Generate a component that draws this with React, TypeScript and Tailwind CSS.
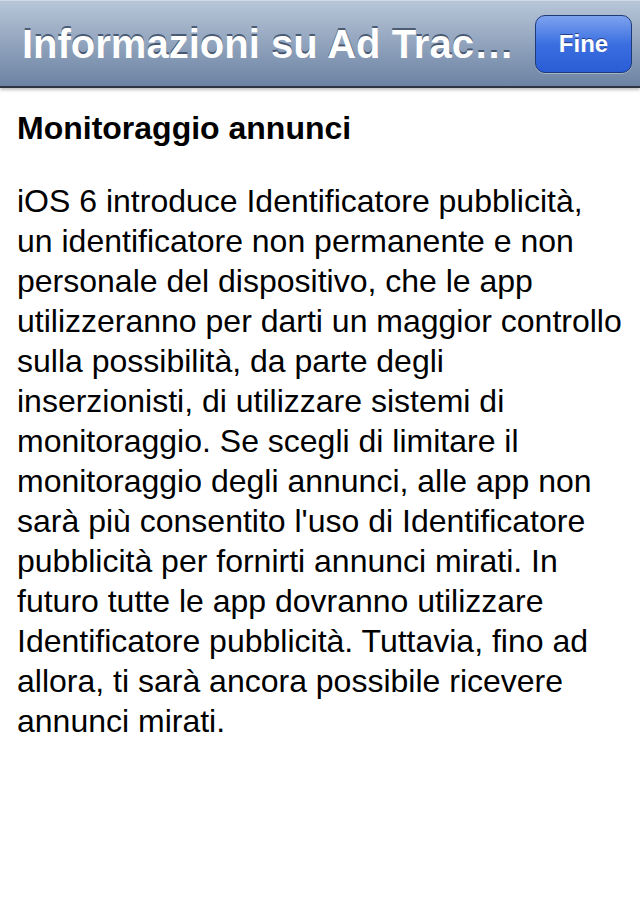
const lines = [
  'iOS 6 introduce Identificatore pubblicità,',
  'un identificatore non permanente e non',
  'personale del dispositivo, che le app',
  'utilizzeranno per darti un maggior controllo',
  'sulla possibilità, da parte degli',
  'inserzionisti, di utilizzare sistemi di',
  'monitoraggio. Se scegli di limitare il',
  'monitoraggio degli annunci, alle app non',
  "sarà più consentito l'uso di Identificatore",
  'pubblicità per fornirti annunci mirati. In',
  'futuro tutte le app dovranno utilizzare',
  'Identificatore pubblicità. Tuttavia, fino ad',
  'allora, ti sarà ancora possibile ricevere',
  'annunci mirati.',
];

export default function App() {
  return (
    <div className="w-[640px] h-[920px] bg-white font-['Liberation_Sans',Arial,sans-serif] overflow-hidden">
      {/* nav bar */}
      <div className="h-[88px] flex items-center justify-between pl-[22px] pr-[8px] bg-gradient-to-b from-[#b8c6d8] to-[#6c83a3] border-t border-t-[#d0dae6] border-b-2 border-b-[#2d3642] shadow-[0_2px_3px_rgba(0,0,0,0.25)]">
        <h1 className="text-white font-bold text-[40px] leading-none whitespace-nowrap [text-shadow:0_-2px_0_rgba(40,55,80,0.7)]">
          Informazioni su Ad Trac…
        </h1>
        <button className="w-[97px] h-[58px] rounded-[10px] border border-[#1e3a78] bg-gradient-to-b from-[#7ea2ee] via-[#3b6fe0] to-[#2a5cd6] text-white font-bold text-[24px] [text-shadow:0_-1px_0_rgba(0,0,40,0.5)] shadow-[0_1px_0_rgba(255,255,255,0.35)]">
          Fine
        </button>
      </div>
      {/* body */}
      <div className="px-[17px] pt-[20px] text-black">
        <h2 className="font-bold text-[32px] leading-[40px]">Monitoraggio annunci</h2>
        <p className="mt-[33px] text-[32px] leading-[40px]">
          {lines.map(l => (
            <span key={l} className="block whitespace-nowrap">{l}</span>
          ))}
        </p>
      </div>
    </div>
  );
}
